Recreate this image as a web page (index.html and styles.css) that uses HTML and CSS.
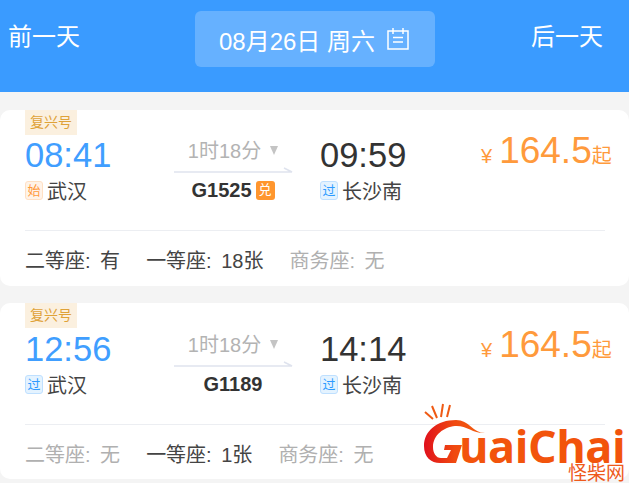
FILE: index.html
```html
<!DOCTYPE html>
<html lang="zh-CN">
<head>
    <meta charset="UTF-8">
    <meta name="viewport" content="width=device-width, initial-scale=1.0">
    <title>车次列表</title>
    <link rel="stylesheet" href="styles.css">
</head>
<body>

    <div class="date-bar">
        <span class="day-link">前一天</span>
        <div class="date-pill">
            <span>08月26日 周六</span>
            <svg class="cal-icon" width="24" height="24" viewBox="0 0 24 24" fill="none" stroke="#fff" stroke-width="1.5">
                <path d="M2 4H22V22H2Z"/>
                <path d="M7 1V7M17 1V7M7 10.5H17M7 15H17"/>
            </svg>
        </div>
        <span class="day-link">后一天</span>
    </div>

    <div class="train-card">
        <div class="tag">复兴号</div>
        <div class="train-main">
            <div class="stop">
                <div class="time time-start">08:41</div>
                <div class="station"><span class="badge badge-start">始</span>武汉</div>
            </div>
            <div class="middle">
                <div class="duration">1时18分<i class="down"></i></div>
                <svg class="arrow" width="120" height="6" viewBox="0 0 120 6" fill="none" stroke="#dfe3ee" stroke-width="1.5">
                    <path d="M0 5H118L110 1"/>
                </svg>
                <div class="train-no">G1525<span class="badge badge-swap">兑</span></div>
            </div>
            <div class="stop stop-end">
                <div class="time">09:59</div>
                <div class="station"><span class="badge badge-pass">过</span>长沙南</div>
            </div>
            <div class="price"><span class="yen">¥</span>164.5<span class="from">起</span></div>
        </div>
        <div class="seats">
            <span>二等座: 有</span>
            <span>一等座: 18张</span>
            <span class="none">商务座: 无</span>
        </div>
    </div>

    <div class="train-card">
        <div class="tag">复兴号</div>
        <div class="train-main">
            <div class="stop">
                <div class="time time-start">12:56</div>
                <div class="station"><span class="badge badge-pass">过</span>武汉</div>
            </div>
            <div class="middle">
                <div class="duration">1时18分<i class="down"></i></div>
                <svg class="arrow" width="120" height="6" viewBox="0 0 120 6" fill="none" stroke="#dfe3ee" stroke-width="1.5">
                    <path d="M0 5H118L110 1"/>
                </svg>
                <div class="train-no">G1189</div>
            </div>
            <div class="stop stop-end">
                <div class="time">14:14</div>
                <div class="station"><span class="badge badge-pass">过</span>长沙南</div>
            </div>
            <div class="price"><span class="yen">¥</span>164.5<span class="from">起</span></div>
        </div>
        <div class="seats">
            <span class="none">二等座: 无</span>
            <span>一等座: 1张</span>
            <span class="none">商务座: 无</span>
        </div>
    </div>

    <!-- watermark -->
    <div class="logo">
        <svg class="logo-mark" width="70" height="70" viewBox="0 0 70 70">
            <defs>
                <linearGradient id="gFill" x1="0" y1="0" x2="1" y2="0">
                    <stop offset="0" stop-color="#e0101c"/>
                    <stop offset="0.5" stop-color="#f04a10"/>
                    <stop offset="1" stop-color="#f2600f"/>
                </linearGradient>
            </defs>
            <path d="M3 9L11 16M10 3L15 15M21 1L19 14M28 2L25 14" stroke="#ef5a14" stroke-width="2" fill="none"/>
            <path d="M63 30C51 30 47 17 34 17C15 17 2 28 2 43C2 54 9 60 18 60H34L40 42H23L22 47H29L25 55H19C14 55 11 50 11 44C11 32 22 24 33 23C44 22 52 31 63 30Z" fill="url(#gFill)"/>
        </svg>
        <div class="logo-word">uaiChai</div>
        <div class="logo-cn">怪柴网</div>
    </div>

</body>
</html>
```

FILE: styles.css
```css
* {
    box-sizing: border-box;
}

body {
    margin: 0;
    height: 483px;
    overflow: hidden;
    position: relative;
    background-color: #f4f4f4;
    font-family: "Liberation Sans", "Noto Sans CJK SC", sans-serif;
    color: #333;
}

.date-bar {
    height: 92px;
    padding: 11px 26px 25px 8px;
    background-color: #3a9bff;
    color: #fff;
    display: flex;
    justify-content: space-between;
    align-items: flex-start;
}

.day-link {
    font-size: 24px;
    line-height: 52px;
}

.date-pill {
    width: 240px;
    height: 56px;
    margin-left: 18px;
    background-color: #66b1ff;
    border-radius: 6px;
    display: flex;
    justify-content: center;
    align-items: center;
    gap: 11px;
    font-size: 24px;
}

.train-card {
    height: 176px;
    margin-bottom: 17px;
    padding: 0 24px 0 25px;
    background-color: #fff;
    border-radius: 10px;
}

.date-bar + .train-card {
    margin-top: 18px;
}

/* second card sits a pixel lower inside */
.train-card + .train-card .train-main {
    margin-top: 1px;
}

.tag {
    width: 52px;
    height: 25px;
    background-color: #fbf0df;
    color: #dfa238;
    font-size: 14px;
    line-height: 25px;
    text-align: center;
}

.train-main {
    height: 96px;
    display: flex;
    align-items: flex-start;
    border-bottom: 1px solid #eceef2;
}

.stop {
    flex: none;
    width: 149px;
}

.stop-end {
    width: 157px;
    margin-left: 28px;
}

.time {
    font-size: 34.5px;
    line-height: 40px;
    color: #333;
}

.time-start {
    color: #409eff;
}

.station {
    display: flex;
    align-items: center;
    gap: 4px;
    height: 31px;
    font-size: 20px;
    color: #444;
}

.badge {
    width: 18px;
    height: 19px;
    border-radius: 3px;
    font-size: 13px;
    line-height: 18px;
    text-align: center;
    flex: none;
}

.badge-start {
    background-color: #fff3e8;
    border: 1px solid #ffe0c4;
    color: #ff9a3c;
}

.badge-pass {
    background-color: #e4f3ff;
    border: 1px solid #bfe0ff;
    color: #2e9bff;
}

.badge-swap {
    display: inline-block;
    width: 19px;
    margin-left: 4px;
    background-color: #ff962e;
    color: #fff;
    font-weight: normal;
}

.middle {
    flex: none;
    width: 118px;
    text-align: center;
}

.duration {
    height: 30px;
    padding-top: 4px;
    font-size: 20px;
    line-height: 24px;
    color: #b3b3b3;
    white-space: nowrap;
}

.down {
    display: inline-block;
    margin-left: 9px;
    vertical-align: 3px;
    border-top: 9px solid #c4c4c4;
    border-left: 4.5px solid transparent;
    border-right: 4.5px solid transparent;
}

.arrow {
    display: block;
    margin-top: 2px;
}

.train-no {
    margin-top: 4px;
    font-size: 20px;
    line-height: 26px;
    font-weight: bold;
    color: #333;
    display: flex;
    justify-content: center;
    align-items: center;
}

.price {
    flex: none;
    font-size: 37px;
    line-height: 32px;
    color: #ff9a3c;
    white-space: nowrap;
    margin-left: 4px;
}

.yen {
    font-size: 20px;
    margin-right: 7px;
}

.from {
    font-size: 20px;
}

.seats {
    display: flex;
    gap: 26px;
    padding-top: 16px;
    font-size: 20px;
    line-height: 28px;
    word-spacing: 4px;
    color: #444;
}

.seats .none {
    color: #b0b0b0;
}

.logo {
    position: absolute;
    left: 422px;
    top: 403px;
    width: 207px;
    height: 80px;
}

.logo-mark {
    position: absolute;
    left: 0;
    top: 0;
}

.logo-word {
    position: absolute;
    left: 37px;
    top: 25px;
    font-family: "Open Sans", "Liberation Sans", sans-serif;
    font-size: 45px;
    line-height: 36px;
    font-weight: bold;
    color: #f2540c;
    letter-spacing: -0.5px;
    white-space: nowrap;
}

.logo-cn {
    position: absolute;
    right: 4px;
    top: 61px;
    font-size: 19px;
    line-height: 19px;
    color: #ee5a1c;
}
```
